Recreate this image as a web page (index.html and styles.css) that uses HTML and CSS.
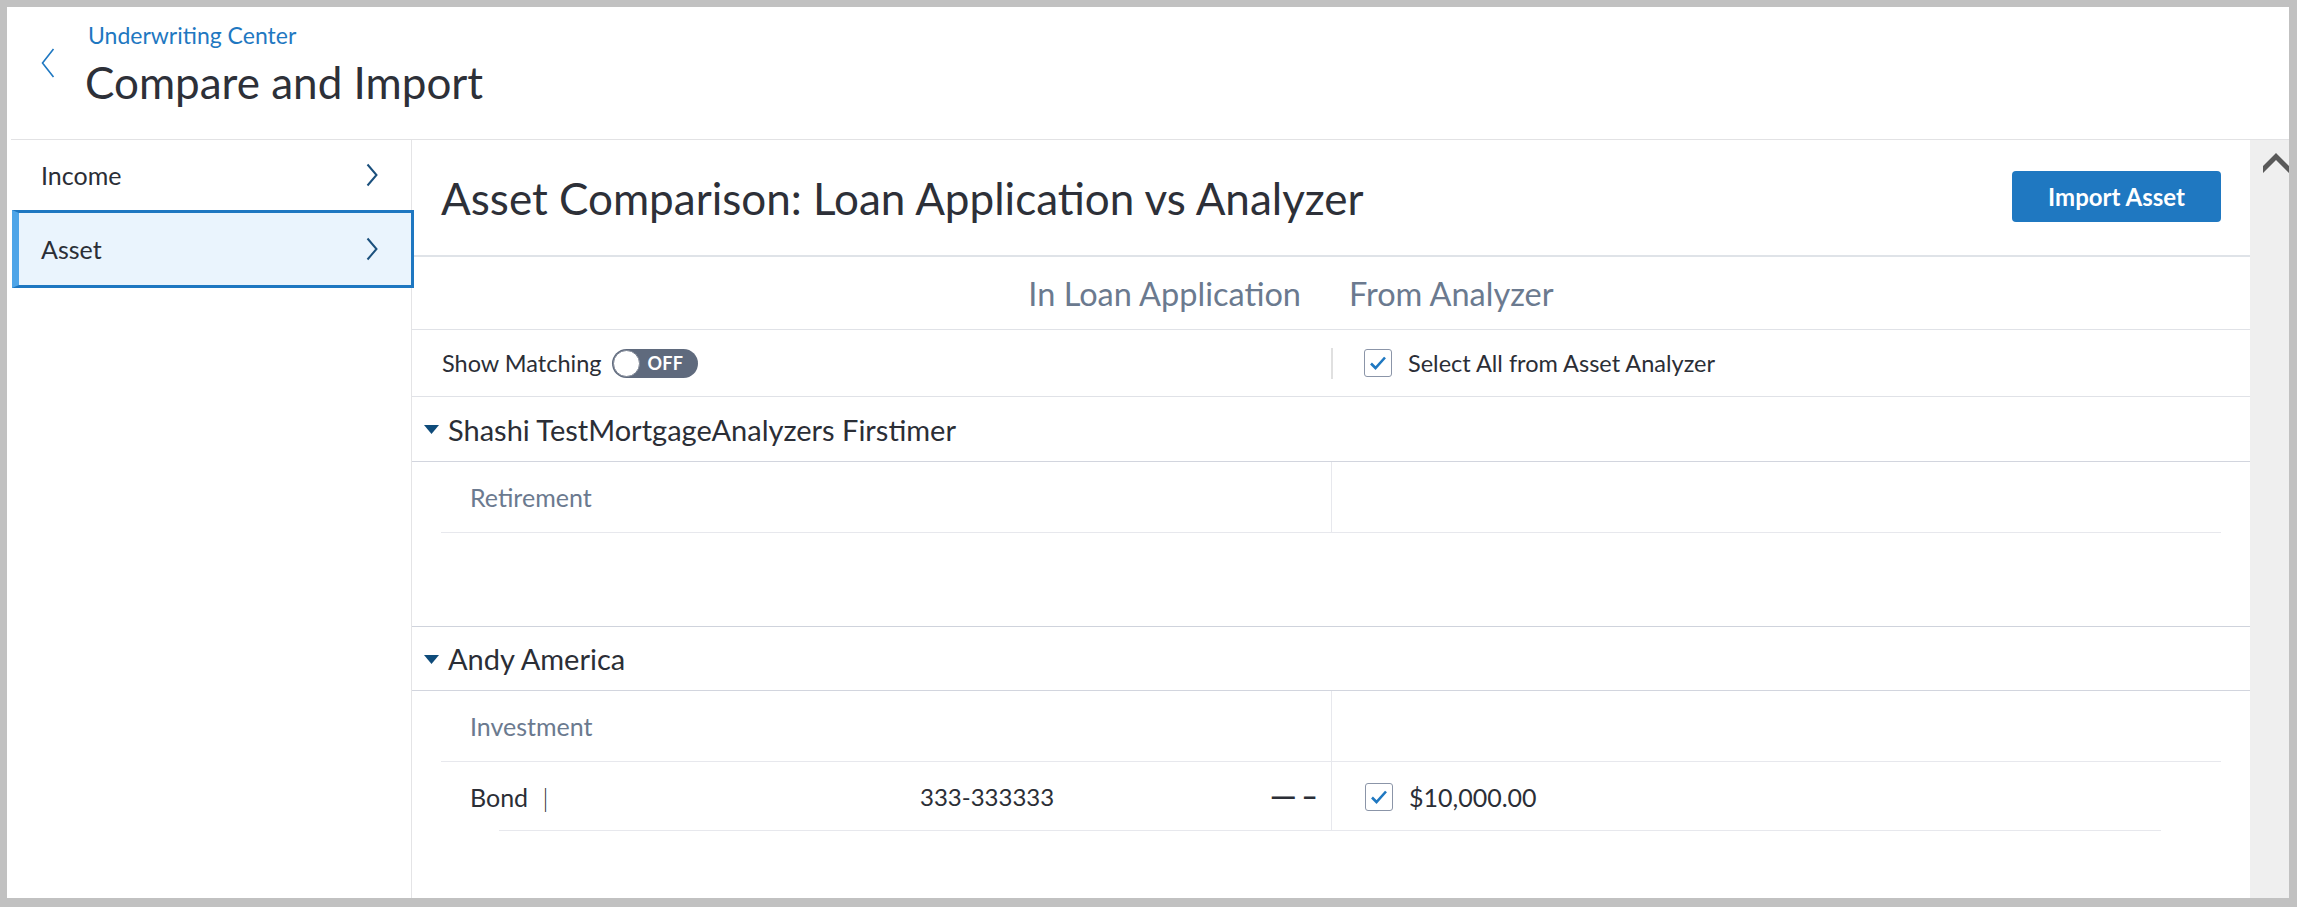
FILE: index.html
```html
<!DOCTYPE html>
<html lang="en">
<head>
<meta charset="utf-8">
<title>Compare and Import</title>
<link rel="stylesheet" href="styles.css">
</head>
<body>
<div class="frame">
  <header class="topbar">
    <a class="back" href="#" aria-label="Back">
      <svg width="14" height="30" viewBox="0 0 14 30"><path d="M12.5 1 L1.5 15 L12.5 29" fill="none" stroke="#1f78c1" stroke-width="1.6"/></svg>
    </a>
    <div class="titles">
      <a class="crumb" href="#">Underwriting Center</a>
      <h1 class="page-title">Compare and Import</h1>
    </div>
  </header>
  <div class="workspace">
    <nav class="sidebar">
      <a class="nav-item" href="#"><span>Income</span><svg class="nav-chev" width="12" height="24" viewBox="0 0 12 24"><path d="M1.5 1.5 L10.5 12 L1.5 22.5" fill="none" stroke="#1b507d" stroke-width="2"/></svg></a>
      <a class="nav-item active" href="#"><span>Asset</span><svg class="nav-chev" width="12" height="24" viewBox="0 0 12 24"><path d="M1.5 1.5 L10.5 12 L1.5 22.5" fill="none" stroke="#1b507d" stroke-width="2"/></svg></a>
    </nav>
    <main class="content">
      <div class="content-head">
        <h2 class="content-title">Asset Comparison: Loan Application vs Analyzer</h2>
        <button class="btn-primary" type="button">Import Asset</button>
      </div>
      <div class="grid-row col-heads">
        <div class="cell left">In Loan Application</div>
        <div class="cell right">From Analyzer</div>
      </div>
      <div class="grid-row controls">
        <div class="cell left">
          <span class="ctl-label">Show Matching</span>
          <span class="toggle"><span class="knob"></span><span class="toggle-text">OFF</span></span>
        </div>
        <div class="cell right">
          <span class="checkbox"><svg width="18" height="16" viewBox="0 0 18 16"><path d="M2 8.5 L6.5 13 L16 2.5" fill="none" stroke="#1f78c1" stroke-width="2.6"/></svg></span>
          <span class="ctl-label">Select All from Asset Analyzer</span>
        </div>
      </div>

      <section class="borrower first">
        <div class="borrower-head">
          <svg class="tri" width="15" height="9" viewBox="0 0 15 9"><path d="M0 0 H15 L7.5 9 Z" fill="#0e4b7a"/></svg>
          <span>Shashi TestMortgageAnalyzers Firstimer</span>
        </div>
        <div class="rows">
          <div class="row category">
            <div class="cell left">Retirement</div>
            <div class="cell right"></div>
          </div>
        </div>
      </section>

      <section class="borrower">
        <div class="borrower-head">
          <svg class="tri" width="15" height="9" viewBox="0 0 15 9"><path d="M0 0 H15 L7.5 9 Z" fill="#0e4b7a"/></svg>
          <span>Andy America</span>
        </div>
        <div class="rows">
          <div class="row category">
            <div class="cell left">Investment</div>
            <div class="cell right"></div>
          </div>
          <div class="row item">
            <div class="cell left">
              <span class="item-name">Bond <span class="sep">|</span></span>
              <span class="item-acct">333-333333</span>
              <span class="item-val">&#8212; &#8211;</span>
            </div>
            <div class="cell right">
              <span class="checkbox"><svg width="18" height="16" viewBox="0 0 18 16"><path d="M2 8.5 L6.5 13 L16 2.5" fill="none" stroke="#1f78c1" stroke-width="2.6"/></svg></span>
              <span class="amount">$10,000.00</span>
            </div>
          </div>
        </div>
      </section>
    </main>
    <div class="scrollbar">
      <svg class="scroll-up" width="26" height="20" viewBox="0 0 26 20"><path d="M13 0 L26 13 L26 20 L13 7 L0 20 L0 13 Z" fill="#595959"/></svg>
    </div>
  </div>
</div>
</body>
</html>
```

FILE: styles.css
```css
* { box-sizing: border-box; }

html, body { height: 100%; }

body {
  margin: 0;
  padding: 7px 8px 9px 7px;
  background: #c1c1c1;
  font-family: "Lato", "Liberation Sans", sans-serif;
  color: #2b2e36;
}

.frame {
  height: 891px;
  background: #ffffff;
  display: flex;
  flex-direction: column;
  overflow: hidden;
}

/* ---------- top bar ---------- */
.topbar {
  flex: 0 0 133px;
  display: flex;
  align-items: flex-start;
  padding-left: 34px;
  border-bottom: 1px solid #e2e2e4;
  margin-left: 4px;
}

.back {
  display: block;
  margin-top: 41px;
  margin-right: 30px;
  line-height: 0;
  margin-left: -4px;
}

.titles {
  display: flex;
  flex-direction: column;
  padding-top: 16px;
}

.crumb {
  padding-left: 3px;
  font-size: 23px;
  line-height: 24px;
  color: #1f78c1;
  text-decoration: none;
}

.page-title {
  margin: 11px 0 0;
  font-size: 44px;
  line-height: 48px;
  font-weight: 400;
  color: #2d3038;
}

/* ---------- workspace ---------- */
.workspace {
  flex: 1;
  display: flex;
  min-height: 0;
}

.sidebar {
  flex: 0 0 405px;
  padding-left: 5px;
  border-right: 1px solid #e4e4e6;
  display: flex;
  flex-direction: column;
}

.nav-item {
  display: flex;
  align-items: center;
  justify-content: space-between;
  height: 70px;
  padding: 0 33px 0 29px;
  font-size: 25px;
  color: #2b2e36;
  text-decoration: none;
}

.nav-item.active {
  height: 78px;
  margin-right: -3px;
  padding: 0 33px 0 22px;
  background: #eaf4fd;
  border: 3px solid #1e77c1;
  border-left: 7px solid #4ea5e8;
  position: relative;
  z-index: 1;
}

.nav-chev { display: block; }

/* ---------- content ---------- */
.content {
  flex: 1;
  display: flex;
  flex-direction: column;
  min-width: 0;
}

.content-head {
  flex: 0 0 117px;
  display: flex;
  align-items: center;
  justify-content: space-between;
  padding: 0 29px;
  border-bottom: 2px solid #dfe3e8;
}

.content-title {
  margin: 0;
  font-size: 44px;
  font-weight: 400;
  line-height: 48px;
  color: #2d3038;
}

.btn-primary {
  width: 209px;
  height: 51px;
  border: 0;
  border-radius: 4px;
  background: #1f78c1;
  color: #ffffff;
  font-family: inherit;
  font-size: 24px;
  font-weight: 700;
  margin-top: -3px;
}

.grid-row {
  display: grid;
  grid-template-columns: 1fr 1fr;
  padding: 0 29px;
  border-bottom: 1px solid #e0e2e7;
}

.col-heads {
  flex: 0 0 73px;
  align-items: center;
  font-size: 32.5px;
  color: #6b7a8f;
}

.col-heads .left { text-align: right; padding-right: 30px; }
.col-heads .right { padding-left: 18px; }

.controls {
  flex: 0 0 67px;
  align-items: center;
  font-size: 23.5px;
}

.controls .cell {
  display: flex;
  align-items: center;
}

.controls .left { padding-left: 1px; gap: 11px; }

.controls .right {
  height: 31px;
  border-left: 2px solid #e0e0e0;
  padding-left: 31px;
  gap: 16px;
}

.ctl-label { color: #2b2e36; }

.toggle {
  width: 86px;
  height: 29px;
  border-radius: 15px;
  background: #5f6a7d;
  display: flex;
  align-items: center;
  padding-left: 1px;
}

.knob {
  width: 27px;
  height: 27px;
  border-radius: 50%;
  background: #ffffff;
  border: 1px solid #7d8594;
}

.toggle-text {
  margin-left: 7px;
  color: #ffffff;
  font-size: 18px;
  font-weight: 700;
  letter-spacing: 0.3px;
}

.checkbox {
  width: 28px;
  height: 28px;
  border: 1px solid #8b95a8;
  border-radius: 3px;
  background: #ffffff;
  display: flex;
  align-items: center;
  justify-content: center;
  flex: 0 0 auto;
}

/* ---------- borrower sections ---------- */
.borrower.first {
  flex: 0 0 230px;
  border-bottom: 1px solid #cfd3dc;
}

.borrower { flex: 1; }

.borrower-head {
  height: 65px;
  display: flex;
  align-items: center;
  gap: 9px;
  padding-left: 12px;
  font-size: 29px;
  color: #2b2e36;
  border-bottom: 1px solid #d2d5de;
}

.borrower:not(.first) .borrower-head { height: 64px; }

.tri { display: block; margin-top: 1px; }

.rows { padding: 0 29px; }

.row {
  display: grid;
  grid-template-columns: 1fr 1fr;
}

.row .cell { display: flex; align-items: center; }

.row .right { border-left: 1px solid #e7e8ed; }

.category {
  height: 71px;
  border-bottom: 1px solid #e7e8ed;
  font-size: 25px;
  color: #6b7a8f;
}

.category .left { padding-left: 29px; }

.item {
  height: 69px;
  font-size: 25px;
  color: #2b2e36;
  background: linear-gradient(#e7e8ed, #e7e8ed) no-repeat;
  background-size: calc(100% - 118px) 1px;
  background-position: 58px 100%;
}

.item .left { padding-left: 29px; }

.item-name { width: 450px; }

.sep { margin-left: 8px; font-weight: 300; }

.item-acct { width: 340px; font-size: 24px; }

.item-val {
  flex: 1;
  text-align: right;
  padding-right: 14px;
  font-family: "Liberation Sans", sans-serif;
  font-size: 23px;
  font-weight: 700;
  letter-spacing: 1px;
}

.item .right { padding-left: 33px; gap: 16px; }

/* ---------- scrollbar ---------- */
.scrollbar {
  flex: 0 0 39px;
  background: #efefef;
  padding: 13px 0 0 13px;
}

.scroll-up { display: block; }
```
